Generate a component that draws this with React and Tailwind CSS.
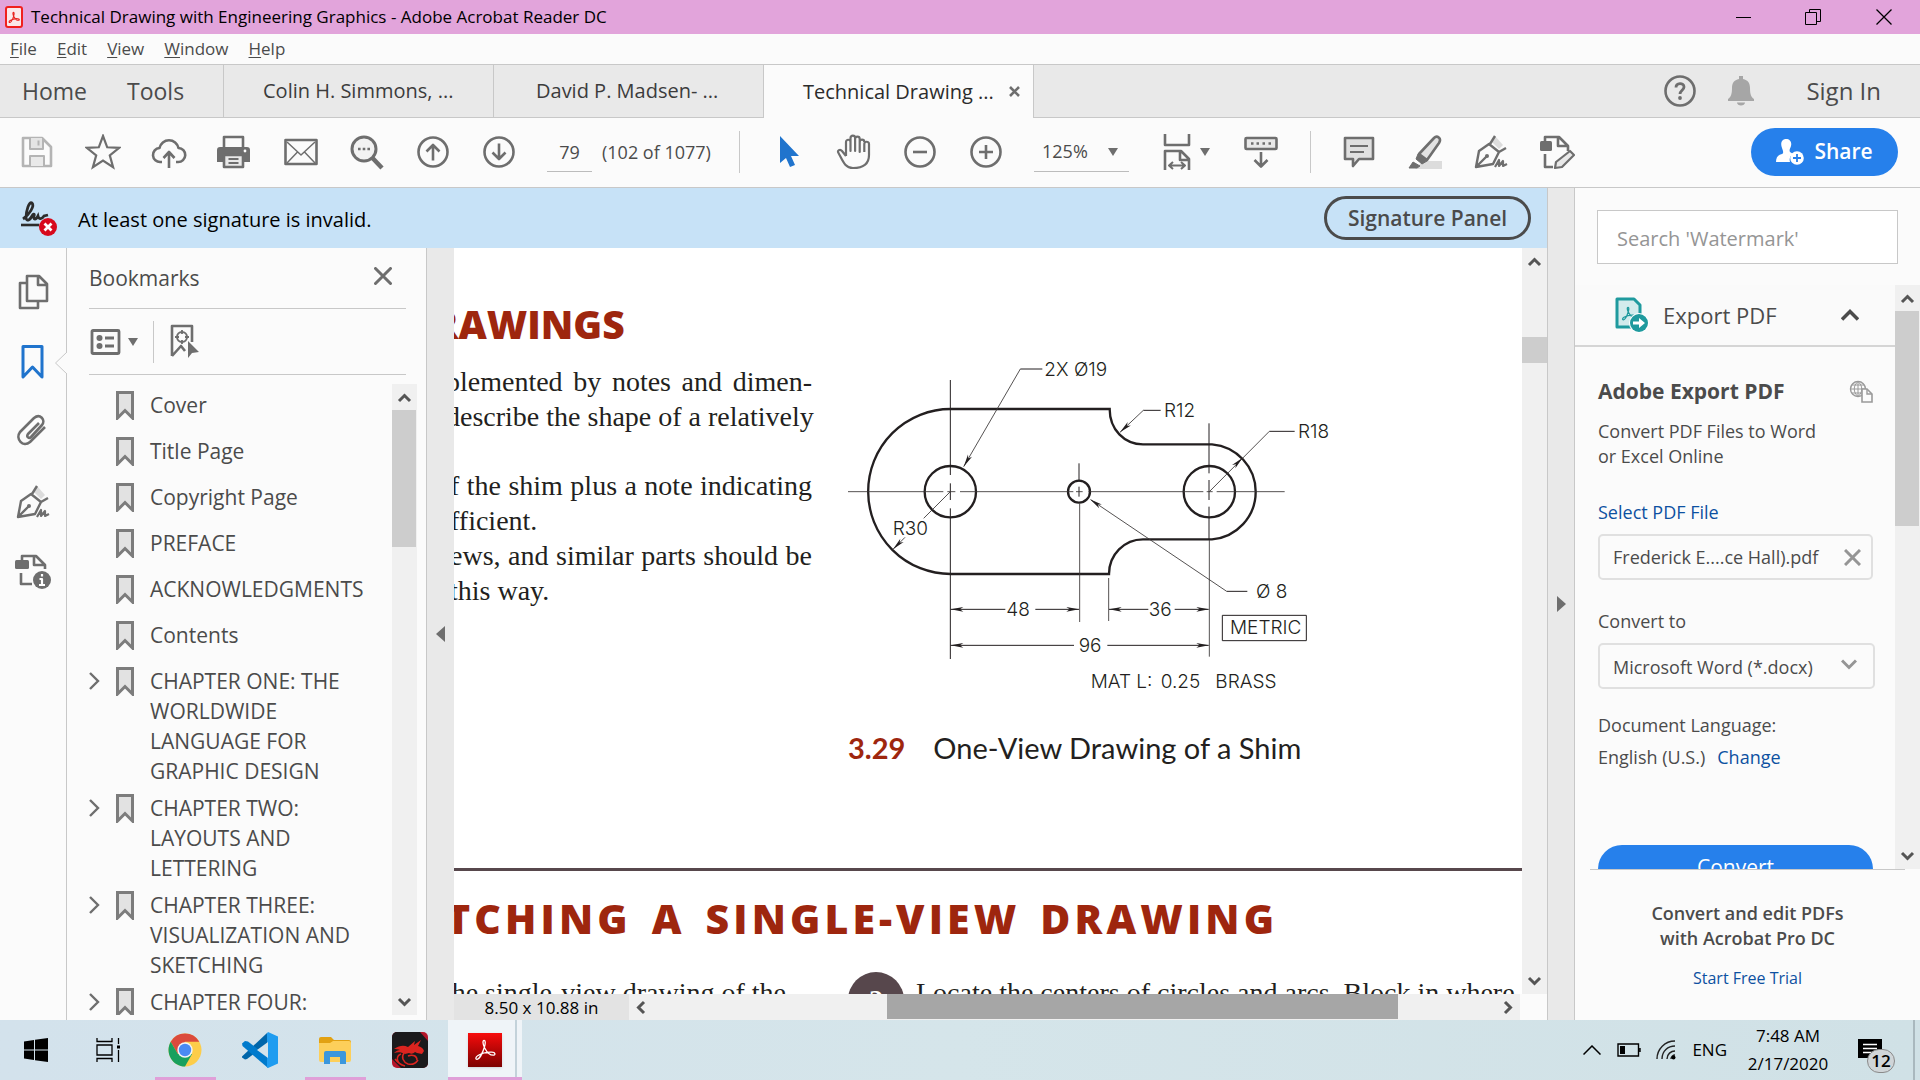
import React from "react";

const GRAY = "#6e6e6e";

/* ---------- shared bits ---------- */

const Icon = ({ size = 36, children, className = "" }) => (
  <svg
    width={size}
    height={size}
    viewBox="0 0 36 36"
    fill="none"
    stroke={GRAY}
    strokeWidth="2.6"
    strokeLinejoin="round"
    className={`shrink-0 ${className}`}
    aria-hidden="true"
  >
    {children}
  </svg>
);

const Caret = () => (
  <svg width="10" height="8" viewBox="0 0 10 8" aria-hidden="true" className="shrink-0">
    <path d="M0 0h10L5 8z" fill={GRAY} />
  </svg>
);

const ARROWS = {
  up: "M2 11 7.5 5.5 13 11",
  down: "M2 4l5.5 5.5L13 4",
  left: "M10 2 4.5 7.5 10 13",
  right: "M5 2l5.5 5.5L5 13",
};

const ScrollArrow = ({ dir }) => (
  <button
    aria-label={`Scroll ${dir}`}
    className="w-[25px] h-[26px] shrink-0 flex items-center justify-center"
  >
    <svg width="15" height="15" viewBox="0 0 15 15" fill="none" stroke="#555" strokeWidth="3">
      <path d={ARROWS[dir]} />
    </svg>
  </button>
);

const AcrobatMark = ({ size, stroke = "#fff", width = 1.4 }) => (
  <svg
    width={size}
    height={size}
    viewBox="0 0 24 24"
    fill="none"
    stroke={stroke}
    strokeWidth={width}
    strokeLinecap="round"
    aria-hidden="true"
  >
    <path d="M11.2 3.2c-1.6 0-1.3 3.4.5 6.9 1.9 3.6 5 6.7 7.8 6.7 2.4 0 2.4-2.6-1.2-2.8-4.6-.3-9.6 1.2-12.8 3.1-2.6 1.6-2.3 3.7-.8 3.5 2.3-.3 5.2-6.2 6.7-11.1 1-3.3 1.3-6.2-.2-6.3z" />
  </svg>
);

const PenIcon = () => (
  <Icon>
    <path d="M22 2l8 9-4 4-8-8z" fill="#dcdcdc" stroke="none" />
    <path d="M3 33 6 17l10-7 10 8-6 12zM3 33l11-11M22 2l-5 8M33 14l-7 4" strokeWidth="2.4" />
    <circle cx="14" cy="22" r="2" fill={GRAY} stroke="none" />
    <path d="M22 33l4-7v6l4-5v5l4-2" strokeWidth="2.2" />
  </Icon>
);

/* ---------- window chrome ---------- */

const TitleBar = () => (
  <header className="h-[34px] shrink-0 bg-[#e2a4db] flex items-center pl-[5px] text-black">
    <span className="w-[18px] h-[22px] shrink-0 rounded-[3px] border-2 border-[#f0201e] bg-[#fbe9ea] flex items-center justify-center">
      <AcrobatMark size={15} stroke="#e8201c" width={1.8} />
    </span>
    <h1 className="ml-2 text-[17px] whitespace-nowrap">
      Technical Drawing with Engineering Graphics - Adobe Acrobat Reader DC
    </h1>
    <div className="ml-auto flex h-full">
      <button aria-label="Minimize" className="w-[70px] flex items-center justify-center">
        <svg width="15" height="15" stroke="#000">
          <path d="M0 7.5h15" />
        </svg>
      </button>
      <button aria-label="Restore" className="w-[70px] flex items-center justify-center">
        <svg width="16" height="16" fill="none" stroke="#000">
          <path d="M.5 3.5h11v12H.5zM4.5 3.5v-3h11v12h-4" />
        </svg>
      </button>
      <button aria-label="Close" className="w-[72px] flex items-center justify-center">
        <svg width="16" height="16" stroke="#000" strokeWidth="1.3">
          <path d="M.5.5l15 15M15.5.5l-15 15" />
        </svg>
      </button>
    </div>
  </header>
);

const MENUS = ["File", "Edit", "View", "Window", "Help"];

const MenuBar = () => (
  <nav className="h-[31px] shrink-0 flex items-center gap-5 pl-[10px] text-[17px] text-[#4b4b4b] border-b border-[#c8c8c8]">
    {MENUS.map((m) => (
      <button key={m}>
        <span className="underline underline-offset-2">{m[0]}</span>
        {m.slice(1)}
      </button>
    ))}
  </nav>
);

const TabBar = () => (
  <div className="h-[53px] shrink-0 flex bg-[#e9e9e9] text-[#4b4b4b]">
    <div className="w-[223px] flex items-center border-b border-[#c8c8c8] pl-[22px] gap-10 text-[23px]">
      <button>Home</button>
      <button>Tools</button>
    </div>
    <button className="w-[270px] border-l border-b border-[#c8c8c8] text-left pl-[39px] text-[20px] text-[#3c3c3c]">
      Colin H. Simmons, ...
    </button>
    <button className="w-[270px] border-l border-b border-[#c8c8c8] text-left pl-[42px] text-[20px] text-[#3c3c3c]">
      David P. Madsen- ...
    </button>
    <div className="w-[271px] border-x border-[#c8c8c8] bg-[#fbfbfb] flex items-center pl-[39px] pr-[13px] text-[20px] text-[#2c2c2c]">
      <button>Technical Drawing ...</button>
      <button aria-label="Close tab" className="ml-auto">
        <svg width="11" height="11" stroke={GRAY} strokeWidth="2.6">
          <path d="M1 1l9 9M10 1l-9 9" />
        </svg>
      </button>
    </div>
    <div className="flex-1 border-b border-[#c8c8c8] flex items-center justify-end pr-[39px]">
      <button aria-label="Help" className="w-8 h-8">
        <svg width="32" height="32" viewBox="0 0 32 32" fill="none" stroke={GRAY} strokeWidth="2.6">
          <circle cx="16" cy="16" r="14.5" />
          <path d="M12 12.5c0-5 8-5 8-.5 0 3-4 3.5-4 7" strokeWidth="2.8" />
          <circle cx="16" cy="23" r="1.9" fill={GRAY} stroke="none" />
        </svg>
      </button>
      <button aria-label="Notifications" className="ml-8">
        <svg width="26" height="30" viewBox="0 0 26 30" fill="#a6a6a6">
          <path d="M11 0h4v3c5 1 7 4 7 9 0 6 1 9 4 11v2H0v-2c3-2 4-5 4-11 0-5 2-8 7-9zM9 26.5h8c0 4-8 4-8 0z" />
        </svg>
      </button>
      <button className="ml-[52px] text-[24px]">Sign In</button>
    </div>
  </div>
);

/* ---------- toolbar ---------- */

const ToolButton = ({ label, children }) => (
  <button aria-label={label} className="w-[66px] h-full shrink-0 flex items-center justify-center">
    {children}
  </button>
);

const Divider = () => <span className="w-px h-[42px] bg-[#c8c8c8] shrink-0" />;

const Toolbar = () => (
  <div className="h-[70px] shrink-0 flex items-center pl-1 pr-[22px] pb-px border-b border-[#c8c8c8] text-[#4b4b4b] text-[18px]">
    <ToolButton label="Save">
      <Icon>
        <g stroke="#b4b4b4">
          <path d="M4 4h19l9 9v19H4z" />
          <path d="M11 4v11h13V4" fill="#e4e4e4" strokeWidth="2" />
          <path d="M19.5 6.5v5" strokeWidth="2" />
          <path d="M11 32V22h14v10" fill="#e9e9e9" strokeWidth="2" />
        </g>
      </Icon>
    </ToolButton>
    <ToolButton label="Star">
      <Icon>
        <path
          d="M18 2l4.2 11.3 12 .5-9.4 7.6 3.3 11.7L18 26.500 7.900 33.100l3.300-11.700L1.800 13.800l12-.5z"
          strokeWidth="2.2"
          strokeLinejoin="miter"
        />
      </Icon>
    </ToolButton>
    <ToolButton label="Upload">
      <Icon>
        <path d="M11 28H9.5A7 7 0 0 1 8.5 14 9.7 9.7 0 0 1 27.5 14 7 7 0 0 1 27 28h-2M18 34V18M12.5 24 18 18l5.5 6" />
      </Icon>
    </ToolButton>
    <ToolButton label="Print">
      <Icon>
        <path d="M7 14V3h19v11" />
        <path
          d="M0 16a3 3 0 0 1 3-3h27a3 3 0 0 1 3 3v12h-6v-6H6v6H0z"
          fill={GRAY}
          stroke="none"
        />
        <path d="M7 21h19v12H7z" fill="#e9e9e9" />
        <path d="M11.5 25h10M11.5 29h10" strokeWidth="1.8" />
        <circle cx="28" cy="17" r="1.4" fill="#fff" stroke="none" />
      </Icon>
    </ToolButton>
    <ToolButton label="Mail">
      <Icon>
        <path d="M2.5 6h31v24h-31z" />
        <path d="M4 8l14 13L32 8M4 29l10.5-11M32 29 21.500 18" strokeWidth="1.5" />
      </Icon>
    </ToolButton>
    <ToolButton label="Find">
      <Icon>
        <circle cx="15" cy="15" r="12" fill="#f2f2f2" strokeWidth="3" />
        <path d="M23.5 24 33 34" strokeWidth="4.5" />
        <path d="M9 15h2.6M13.7 15h2.6M18.4 15H21" />
      </Icon>
    </ToolButton>
    <ToolButton label="Previous page">
      <Icon>
        <circle cx="18" cy="18" r="14.5" />
        <path d="M18 26.5V11M11.5 17.5 18 11l6.5 6.5" />
      </Icon>
    </ToolButton>
    <ToolButton label="Next page">
      <Icon>
        <circle cx="18" cy="18" r="14.5" />
        <path d="M18 9.5V25M11.5 18.5 18 25l6.5-6.5" />
      </Icon>
    </ToolButton>

    <input
      aria-label="Page"
      defaultValue="79"
      className="ml-[15px] w-[45px] h-10 shrink-0 text-center bg-transparent border-b border-[#bcbcbc]"
    />
    <span className="ml-[10px] w-[137px] whitespace-nowrap">(102 of 1077)</span>
    <Divider />

    <div className="flex ml-[15px]">
      <ToolButton label="Select">
        <Icon>
          <path d="M10 2v27l6-5 4 9 5-2-4-9h8z" fill="#2074cd" stroke="none" />
        </Icon>
      </ToolButton>
      <ToolButton label="Pan">
        <Icon>
          <path
            d="M10 22V8a2.2 2.2 0 0 1 4.500 0v9V4a2.200 2.200 0 0 1 4.600 0v13V5a2.200 2.200 0 0 1 4.600 0v13V8a2.200 2.200 0 0 1 4.600 0M10 22l-4-5c-2-2.500-5-.5-3.500 2 4 7 6 15 14.500 15 10 0 16-4 16-13V10c0-3-4.700-3-4.700 0v8"
            strokeWidth="2.2"
          />
        </Icon>
      </ToolButton>
      <ToolButton label="Zoom out">
        <Icon>
          <circle cx="18" cy="18" r="14.5" />
          <path d="M11 18h14" />
        </Icon>
      </ToolButton>
      <ToolButton label="Zoom in">
        <Icon>
          <circle cx="18" cy="18" r="14.5" />
          <path d="M11 18h14M18 11v14" />
        </Icon>
      </ToolButton>
    </div>

    <div className="relative ml-[15px] w-[95px] shrink-0">
      <select
        aria-label="Zoom"
        className="appearance-none w-full h-10 pl-2 bg-transparent border-b border-[#bcbcbc]"
      >
        <option>125%</option>
      </select>
      <span className="absolute right-[11px] top-4 pointer-events-none">
        <Caret />
      </span>
    </div>

    <button aria-label="Fit width" className="ml-[30px] flex items-center gap-[5px]">
      <Icon>
        <path d="M6 0v11h24V0M6 36V17h16l8 8v11M21 17v9h9" />
        <path d="M11 31.5h14M14 28l-4 3.5 4 3.5M22 28l4 3.5-4 3.5" strokeWidth="2" />
      </Icon>
      <Caret />
    </button>
    <div className="flex ml-[18px] w-[82px]">
      <ToolButton label="Reading mode">
        <Icon>
          <rect x="2.5" y="4" width="31" height="11" rx="1" fill="#e9e9e9" />
          <path d="M8 9.5h2.5M13.5 9.5H16M19.5 9.5H22M25.5 9.5H28M18 18v14M11.5 26 18 32.5l6.5-6.5" />
        </Icon>
      </ToolButton>
    </div>
    <Divider />

    <div className="flex ml-[15px]">
      <ToolButton label="Comment">
        <Icon>
          <path d="M4 4h28v21H18l-6 7v-7H4z" fill="#e0e0e0" />
          <path d="M9 12h18M9 18h14" strokeWidth="2" />
        </Icon>
      </ToolButton>
      <ToolButton label="Highlight">
        <Icon>
          <path d="M16 27h19v8H8z" fill="#dcdcdc" stroke="none" />
          <path d="M12 20 27 4c3-3 8 0 5 5L20 26z" fill="#e2e2e2" />
          <path d="M11 20l9 7-5 3-6-5zM6 28l7 4-3 2H2z" fill={GRAY} strokeWidth="1" />
        </Icon>
      </ToolButton>
      <ToolButton label="Sign">
        <PenIcon />
      </ToolButton>
      <ToolButton label="Edit page">
        <Icon>
          <path d="M6 7V3h14l9 9v5M19 3v9h9M6 20v13h8" />
          <rect x="1" y="7" width="12" height="10" rx="1.5" fill={GRAY} stroke="none" />
          <path d="M16 34l1-6L31 17l4 4-12 12z" fill="#e9e9e9" strokeWidth="2.2" />
        </Icon>
      </ToolButton>
    </div>

    <button className="ml-auto w-[147px] h-12 shrink-0 rounded-full bg-[#2680eb] text-white text-[21px] font-semibold flex items-center justify-center gap-[10px]">
      <svg width="28" height="28" viewBox="0 0 28 28" fill="#fff" aria-hidden="true">
        <path d="M10 1c4 0 6 3 5 7-1 3-2 4-1 6l3 2c-3 2-4 5-3 8H0c0-5 2-7 6-8 2-1 1-3 0-6C4 5 6 1 10 1z" />
        <circle cx="21" cy="20" r="6.8" />
        <path d="M21 16v8M17 20h8" stroke="#2680eb" strokeWidth="1.8" />
      </svg>
      Share
    </button>
  </div>
);

/* ---------- left side ---------- */

const Rail = () => (
  <aside className="relative w-[67px] shrink-0 border-r border-[#c8c8c8] pt-[9px] flex flex-col items-center">
    <button aria-label="Pages" className="h-[70px]">
      <Icon>
        <path d="M11 9H5v25h18v-6" />
        <path d="M12 2h12l8 8v17H12zM23 2v9h9" fill="#fbfbfb" />
      </Icon>
    </button>
    <button aria-label="Bookmarks" className="h-[70px]">
      <Icon>
        <path d="M8 2.5h19V33l-9.500-10L8 33z" stroke="#2074cd" strokeWidth="3" />
      </Icon>
    </button>
    <button aria-label="Attachments" className="h-[70px]">
      <Icon>
        <path d="M24 9 13 20c-2 3 1 5 3 3l11-12c4-5-2-12-8-7L5 18C0 25 8 34 15 28l15-15" />
      </Icon>
    </button>
    <button aria-label="Signatures" className="h-[70px]">
      <PenIcon />
    </button>
    <button aria-label="Page info" className="h-[70px]">
      <Icon>
        <path d="M7 6V2h14l9 9v4M19 2v9h10M6 19v11h11" />
        <rect x="0" y="6" width="14" height="9" rx="1.5" fill={GRAY} stroke="none" />
        <circle cx="27" cy="26" r="9" fill={GRAY} stroke="none" />
        <path d="M27 20v2.5M24.5 25H27v5.5M24 31h6" stroke="#fff" strokeWidth="2.2" />
      </Icon>
    </button>
    {/* notch pointing at the active panel */}
    <svg width="13" height="22" className="absolute -right-px top-[104px]" fill="#fbfbfb">
      <path d="M13 0 1.5 11 13 22" stroke="#c8c8c8" />
    </svg>
  </aside>
);

const BOOKMARKS = [
  { title: "Cover" },
  { title: "Title Page" },
  { title: "Copyright Page" },
  { title: "PREFACE" },
  { title: "ACKNOWLEDGMENTS" },
  { title: "Contents" },
  { title: "CHAPTER ONE: THE WORLDWIDE LANGUAGE FOR GRAPHIC DESIGN", nested: true },
  { title: "CHAPTER TWO: LAYOUTS AND LETTERING", nested: true },
  { title: "CHAPTER THREE: VISUALIZATION AND SKETCHING", nested: true },
  { title: "CHAPTER FOUR:", nested: true },
];

const BookmarksPanel = () => (
  <section className="w-[360px] shrink-0 border-r border-[#c8c8c8] flex flex-col text-[#4b4b4b]">
    <div className="h-[61px] ml-[22px] mr-5 shrink-0 flex items-center border-b border-[#c8c8c8] pr-[14px]">
      <h2 className="text-[21px] pt-[2px]">Bookmarks</h2>
      <button aria-label="Close panel" className="ml-auto mb-1">
        <svg width="18" height="18" stroke={GRAY} strokeWidth="3" strokeLinecap="round">
          <path d="M1.5 1.5l15 15M16.5 1.5l-15 15" />
        </svg>
      </button>
    </div>
    <div className="h-[66px] ml-[22px] mr-5 shrink-0 flex items-center border-b border-[#c8c8c8]">
      <button aria-label="Options" className="flex items-center gap-[7px]">
        <svg width="32" height="26" viewBox="0 0 32 26" fill="none" stroke={GRAY} strokeWidth="2.8">
          <rect x="3" y="1.5" width="27" height="23" rx="1" />
          <path d="M16 9h9M16 17h9" />
          <circle cx="10.5" cy="9" r="3" fill={GRAY} stroke="none" />
          <circle cx="10.5" cy="17" r="3" fill={GRAY} stroke="none" />
        </svg>
        <Caret />
      </button>
      <span className="ml-[15px] mr-[14px]">
        <span className="block w-px h-[42px] bg-[#c8c8c8]" />
      </span>
      <button aria-label="Find current bookmark">
        <Icon>
          <path d="M4 32V2h20v16M4 32l9-10 4 5" />
          <circle cx="14" cy="13" r="5" strokeWidth="2" />
          <path d="M14 6v4M14 16v4M7 13h4M17 13h4" strokeWidth="1.8" />
          <path d="M20 17v17l4-5 7-1z" fill={GRAY} stroke="none" />
        </Icon>
      </button>
    </div>
    <div className="mt-[9px] mb-[5px] flex-1 min-h-0 flex pr-[9px]">
      <ul className="flex-1 min-w-0 overflow-hidden pt-[6px] pl-[22px] text-[21px] leading-[30px]">
        {BOOKMARKS.map((b) => (
          <li key={b.title} className="flex min-h-[46px] pb-[7px]">
            <span className="w-[27px] shrink-0 pt-[6px]">
              {b.nested && (
                <svg width="11" height="18" fill="none" stroke={GRAY} strokeWidth="2.4">
                  <path d="M1 1l8 8-8 8" />
                </svg>
              )}
            </span>
            <svg width="18" height="29" className="shrink-0 mt-px" aria-hidden="true">
              <path d="M1.5 1.5h15V27L9 19.5 1.5 27z" fill="#e2e2e2" stroke="#7c7c7c" strokeWidth="3" />
            </svg>
            <span className="ml-4 w-[230px]">{b.title}</span>
          </li>
        ))}
      </ul>
      <div className="w-[25px] shrink-0 bg-[#f0f0f0] flex flex-col">
        <ScrollArrow dir="up" />
        <span className="h-[137px] mr-px bg-[#cdcdcd]" />
        <span className="mt-auto" />
        <ScrollArrow dir="down" />
      </div>
    </div>
  </section>
);

/* ---------- document ---------- */

/* arrowhead whose tip sits at x,y and points along the given angle */
const Head = ({ x, y, angle }) => (
  <path d="M0 0-38-7-28 0-38 7z" transform={`translate(${x} ${y}) rotate(${angle})`} fill="#231f20" stroke="none" />
);

const ShimDrawing = () => (
  <svg
    width="500"
    height="370"
    viewBox="0 0 1500 1110"
    fill="none"
    stroke="#231f20"
    className="block"
    role="img"
    aria-label="One-view drawing of a shim"
  >
    <g strokeWidth="7">
      <path d="M332 207H809c0 62 44 106 100 106h207a143 143 0 0 1 0 285H909c-56 0-102 46-102 104H332a247.500 247.500 0 0 1 0-495z" />
      <circle cx="331" cy="455" r="77" />
      <circle cx="717" cy="455" r="33" />
      <circle cx="1108" cy="455" r="77" />
    </g>
    <g strokeWidth="3">
      <path d="M331 120v285M331 430v50M331 505v452M1107 250v150M1107 420v60M1107 500v100M717 370v55M717 440v30" />
      <path d="M332 808h164M586 808h131M807 808h118M1004 808h102M332 916h370M802 916h304" />
      <path d="M541 87h66M910 211h52M1288 274h76M1160 754h62" />
      <path d="M1147 826h252v76h-252z" />
    </g>
    <g strokeWidth="2.6" stroke="#3a3637">
      <path d="M24 455H310M322 455h24M360 455h340M708 455h20M745 455h345M1100 455h18M1130 455h204" />
      <path d="M719 490v356M806 714v129M1108 600v350" />
      <path d="M541 87 371 380M910 211l-70 66M1288 274 1108 455M752 479l408 275M331 455l-80 80M195 592l-36 36" />
    </g>
    <Head x={371} y={380} angle={120} />
    <Head x={840} y={277} angle={137} />
    <Head x={1208} y={353} angle={-45} />
    <Head x={750} y={478} angle={214} />
    <Head x={159} y={628} angle={135} />
    <Head x={332} y={808} angle={180} />
    <Head x={717} y={808} angle={0} />
    <Head x={807} y={808} angle={180} />
    <Head x={1107} y={808} angle={0} />
    <Head x={332} y={916} angle={180} />
    <Head x={1107} y={916} angle={0} />
    <g fill="#231f20" stroke="none" fontFamily="Inter, sans-serif" fontWeight="300" fontSize="57">
      <text x="613" y="107">2X Ø19</text>
      <text x="972" y="231">R12</text>
      <text x="1374" y="294">R18</text>
      <text x="158" y="585">R30</text>
      <text x="1248" y="773">Ø 8</text>
      <text x="499" y="827">48</text>
      <text x="926" y="827">36</text>
      <text x="716" y="935">96</text>
      <text x="1170" y="881">METRIC</text>
      <text x="752" y="1043">MAT L:</text>
      <text x="962" y="1043">0.25</text>
      <text x="1126" y="1043">BRASS</text>
    </g>
  </svg>
);

const Page = () => (
  <article className="flex-1 min-w-0 overflow-hidden bg-white text-[#231f20] whitespace-nowrap">
    <div className="flex gap-7">
      <div className="w-[358px] shrink-0 pt-14 font-['Liberation_Serif',serif] text-[28px]">
        <h2 className="-ml-[22px] font-['Open_Sans',sans-serif] font-extrabold text-[39px] leading-10 text-[#9e260e]">
          RAWINGS
        </h2>
        <div className="-ml-2 mt-5 leading-[35px]">
          <p className="[text-align-last:justify]">plemented by notes and dimen-</p>
          <p className="[text-align-last:justify]">describe the shape of a relatively</p>
        </div>
        <div className="-ml-1 mt-[34px] leading-[35px]">
          <p className="[text-align-last:justify]">f the shim plus a note indicating</p>
          <p>fficient.</p>
          <p className="[text-align-last:justify]">ews, and similar parts should be</p>
          <p>this way.</p>
        </div>
      </div>
      <figure className="pt-[92px]">
        <ShimDrawing />
        <figcaption className="mt-5 pl-2 flex gap-7 font-['Lato',sans-serif] text-[29px] leading-9">
          <b className="text-[#9e260e]">3.29</b>
          <span>One-View Drawing of a Shim</span>
        </figcaption>
      </figure>
    </div>
    <hr className="mt-[102px] border-0 h-[3px] bg-[#57474c]" />
    <h2 className="mt-[23px] -ml-2 flex gap-5 font-['Open_Sans',sans-serif] font-extrabold text-[41px] leading-[48px] tracking-widest text-[#9e260e]">
      <span>TCHING</span> <span>A</span> <span>SINGLE-VIEW</span> <span>DRAWING</span>
    </h2>
    <div className="mt-[30px] flex font-['Liberation_Serif',serif] text-[28px] leading-[42px]">
      <p className="w-[332px] shrink-0 flex justify-end">he single-view drawing of the</p>
      <span className="ml-[62px] w-14 h-14 shrink-0 rounded-full bg-[#57474c] text-white font-bold flex items-center justify-center">
        2
      </span>
      <p className="ml-3">Locate the centers of circles and arcs. Block in where</p>
    </div>
  </article>
);

const DocumentView = () => (
  <main className="flex-1 min-w-0 flex flex-col">
    <div className="flex-1 min-h-0 flex">
      <Page />
      <div className="w-[25px] shrink-0 bg-[#f0f0f0] flex flex-col">
        <ScrollArrow dir="up" />
        <span className="mt-[63px] h-[26px] bg-[#cdcdcd]" />
        <span className="mt-auto" />
        <ScrollArrow dir="down" />
      </div>
    </div>
    <div className="h-[26px] shrink-0 flex">
      <div className="w-[175px] shrink-0 bg-[#e3e3e3] text-black text-[17px] leading-[28px] text-center">
        8.50 x 10.88 in
      </div>
      <div className="flex-1 bg-[#f0f0f0] flex">
        <ScrollArrow dir="left" />
        <span className="flex-1" />
        <span className="w-[511px] mb-px bg-[#a6a6a6]" />
        <span className="w-[97px]" />
        <ScrollArrow dir="right" />
      </div>
      <span className="w-[27px] bg-[#fbfbfb]" />
    </div>
  </main>
);

const SignatureBar = () => (
  <div className="h-[60px] shrink-0 bg-[#c7e2f7] flex items-center pl-5 pr-4">
    <svg width="38" height="38" viewBox="0 0 38 38" fill="none" aria-hidden="true">
      <path
        d="M3 20c6-4 12-13 9-16-3-2-6 8-6 15 1 4 4 2 6-2 1-2 3-3 2 0-1 4 2 4 4 0 1 4 4 3 6 0l4-1"
        stroke="#2c2c2c"
        strokeWidth="2.8"
      />
      <path d="M1 26h18" stroke="#2c2c2c" strokeWidth="2.6" />
      <circle cx="28" cy="28" r="9" fill="#d7091c" />
      <path d="M24.5 24.5l7 7M31.5 24.5l-7 7" stroke="#fff" strokeWidth="2.8" />
    </svg>
    <p className="ml-5 pt-1 text-[20px] text-black">At least one signature is invalid.</p>
    <button className="ml-auto w-[207px] h-11 rounded-full border-[3px] border-[#4b4b4b] text-[#4b4b4b] text-[21px] leading-[36px] font-semibold">
      Signature Panel
    </button>
  </div>
);

/* ---------- tools pane ---------- */

const ToolsPane = () => (
  <aside className="w-[345px] shrink-0 flex flex-col text-[18px] leading-[25px] text-[#4b4b4b]">
    <div className="pl-[22px] pr-[22px] pt-[22px] shrink-0">
      <input
        aria-label="Search tools"
        placeholder="Search 'Watermark'"
        className="w-full h-[54px] pl-[19px] pt-[2px] bg-white border border-[#c8c8c8] text-[20px] placeholder:text-[#959595]"
      />
    </div>
    <div className="mt-[21px] flex-1 min-h-0 flex">
      <div className="flex-1 min-w-0 overflow-hidden">
        <button className="w-full h-[62px] border-b-2 border-[#d5d5d5] bg-[#fafafa] flex items-center pl-10 pr-[36px] text-[22px]">
          <svg width="34" height="36" viewBox="0 0 34 36" aria-hidden="true">
            <path d="M2 2h17l6 6v22H2z" fill="#d3ebec" stroke="#1f9a9e" strokeWidth="3" strokeLinejoin="round" />
            <g transform="translate(5 8) scale(.72)">
              <path
                d="M11.2 3.2c-1.6 0-1.3 3.4.5 6.9 1.9 3.6 5 6.7 7.8 6.7 2.4 0 2.4-2.6-1.2-2.8-4.6-.3-9.6 1.2-12.8 3.1-2.6 1.6-2.3 3.7-.8 3.5 2.3-.3 5.2-6.2 6.7-11.1 1-3.3 1.3-6.2-.2-6.3z"
                fill="none"
                stroke="#1f9a9e"
                strokeWidth="1.8"
              />
            </g>
            <circle cx="24" cy="26" r="10" fill="#fff" />
            <circle cx="24" cy="26" r="9" fill="#1f9a9e" />
            <path d="M18 24.5h6V21l6 5-6 5v-3.5h-6z" fill="#fff" />
          </svg>
          <span className="ml-[14px]">Export PDF</span>
          <svg width="18" height="12" className="ml-auto" fill="none" stroke="#4b4b4b" strokeWidth="3.5">
            <path d="M1 10.5l8-8 8 8" />
          </svg>
        </button>
        <div className="pl-[23px] pr-5">
          <div className="mt-8 flex items-center">
            <h3 className="text-[21px] font-bold">Adobe Export PDF</h3>
            <svg width="24" height="24" className="ml-auto mr-[2px]" fill="none" stroke="#9a9a9a" strokeWidth="1.4">
              <circle cx="9" cy="9" r="7.5" />
              <path d="M1 9h16M2.5 5h13M2.5 13h13M9 1v16M9 1.5c-5 4-5 11 0 15M9 1.5c5 4 5 11 0 15" strokeWidth="1" />
              <path d="M13 9h5l5 5v8H13z" fill="#fbfbfb" strokeWidth="1.6" />
              <path d="M18 9v5h5" />
            </svg>
          </div>
          <p className="mt-[15px]">
            Convert PDF Files to Word
            <br />
            or Excel Online
          </p>
          <a href="#select" className="mt-[31px] block text-[#0d51a1]">
            Select PDF File
          </a>
          <div className="mt-[9px] h-[46px] mr-[2px] rounded-[5px] border-2 border-[#e0e0e0] flex items-center pl-[13px] pr-[10px]">
            <span>Frederick E....ce Hall).pdf</span>
            <button aria-label="Remove file" className="ml-auto">
              <svg width="17" height="17" stroke="#959595" strokeWidth="3">
                <path d="M1 1l15 15M16 1 1 16" />
              </svg>
            </button>
          </div>
          <label htmlFor="format" className="mt-[29px] block">
            Convert to
          </label>
          <div className="relative mt-[9px]">
            <select
              id="format"
              className="appearance-none w-full h-[46px] rounded-[5px] border-2 border-[#e0e0e0] bg-transparent pl-[13px] pt-[2px]"
            >
              <option>Microsoft Word (*.docx)</option>
            </select>
            <svg
              width="16"
              height="11"
              className="absolute right-[18px] top-4 pointer-events-none"
              fill="none"
              stroke="#959595"
              strokeWidth="3"
            >
              <path d="M1 1.5l7 7 7-7" />
            </svg>
          </div>
          <p className="mt-6">Document Language:</p>
          <p className="mt-[7px]">
            English (U.S.)
            <a href="#language" className="ml-3 text-[#0d51a1]">
              Change
            </a>
          </p>
          <button className="mt-[75px] w-[275px] h-12 pb-1 rounded-full bg-[#2680eb] text-white text-[21px]">
            Convert
          </button>
        </div>
      </div>
      <div className="w-[25px] shrink-0 bg-[#f0f0f0] flex flex-col">
        <ScrollArrow dir="up" />
        <span className="h-[215px] mr-px bg-[#cdcdcd]" />
        <span className="mt-auto" />
        <ScrollArrow dir="down" />
      </div>
    </div>
    <div className="h-[151px] shrink-0 ml-[15px] mr-[15px] border-t border-[#c8c8c8] pt-[31px] text-center">
      <p className="font-semibold">
        Convert and edit PDFs
        <br />
        with Acrobat Pro DC
      </p>
      <a href="#trial" className="mt-[15px] block text-[16px] text-[#0d51a1]">
        Start Free Trial
      </a>
    </div>
  </aside>
);

/* ---------- taskbar ---------- */

const TaskItem = ({ label, running, children }) => (
  <button aria-label={label} className="relative w-[75px] h-full pr-[2px] flex items-center justify-center">
    {children}
    {running && <span className="absolute bottom-0 left-[7px] right-[7px] h-[3px] bg-[#e09fd8]" />}
  </button>
);

const Taskbar = () => (
  <footer className="h-[60px] shrink-0 flex text-black bg-linear-to-r from-[#d3e2ec] via-[#d5e5ea] to-[#d0e1e6]">
    <button aria-label="Start" className="w-[72px] flex items-center justify-center">
      <svg width="24" height="24">
        <path d="M0 3.5 10 2v9.5H0zM11 1.8 24 0v11.5H11zM0 12.5h10V22L0 20.500zM11 12.500h13V24l-13-1.800z" />
      </svg>
    </button>
    <button aria-label="Task view" className="w-[72px] mr-1 flex items-center justify-center">
      <svg width="25" height="24" fill="none" stroke="#000" strokeWidth="1.3">
        <path d="M1 0v3.5h15V0M1 24v-3.5h15V24M1 7h15v10H1zM22.5 0v6M22.5 12v12" />
        <path d="M21 7.5h3v3h-3z" fill="#000" stroke="none" />
      </svg>
    </button>
    <TaskItem label="Chrome" running>
      <svg width="34" height="34">
        <circle cx="17" cy="17" r="16.5" fill="#fdcd4a" />
        <path d="M2.7 8.8A16.5 16.5 0 0 1 31.3 8.8H17L9.900 21z" fill="#db4a3c" />
        <path d="M2.7 8.8A16.5 16.5 0 0 0 17 33.5l7.1-12.4-14.2 0z" fill="#18a05e" />
        <circle cx="17" cy="17" r="7.7" fill="#f4f4f4" />
        <circle cx="17" cy="17" r="6.2" fill="#4a8af4" />
      </svg>
    </TaskItem>
    <TaskItem label="Visual Studio Code">
      <svg width="36" height="36">
        <path d="M0 24.5 25 1l4 8-24 18-2 .5-3-2z" fill="#0065a9" />
        <path d="M0 11.5l3-2.5 3 .5 22 17L26 36 .5 14z" fill="#007acc" />
        <path d="M26 0l10 4.5v27L26 36c-1.5-1-1-2-1-3V4c0-1-.5-3 1-4z" fill="#1f9cf0" />
        <path d="M26 10v16L15 18z" fill="#d4e3eb" />
      </svg>
    </TaskItem>
    <TaskItem label="File Explorer" running>
      <svg width="34" height="28" viewBox="0 0 34 28">
        <path d="M1 3a2 2 0 0 1 2-2h10l3 3h15a2 2 0 0 1 2 2v7H1z" fill="#e2a112" />
        <path d="M1 7h11l3-2h16a2 2 0 0 1 2 2v17a2 2 0 0 1-2 2H3a2 2 0 0 1-2-2z" fill="#fdcf5a" />
        <path d="M6 28V17a2 2 0 0 1 2-2h18a2 2 0 0 1 2 2v11h-6v-7H12v7z" fill="#3c97dd" />
      </svg>
    </TaskItem>
    <TaskItem label="Dragon Center">
      <svg width="36" height="36">
        <rect width="36" height="36" rx="5" fill="#b5162a" />
        <path d="M5 0h23l8 9v22a5 5 0 0 1-5 5H9l-9-9V5a5 5 0 0 1 5-5z" fill="#1a1a1c" />
        <path d="M2 17c6-4 10-4 14-2l7-6-1 4 7-5-3 6c3 1 5 2 6 5l-2 3-5-1-2-1c-2 2-4 2-6 1l-4 1c-4-2-7-2-11-1 2-2 4-3 6-3-2-1-4-1-6-1z" fill="#dc241f" />
        <path d="M9 22c-5 2-5 8 1 11M12 21c-3 4-1 9 4 11 4 1 8-1 10-4M16 24c5-2 9 0 9 4M3 27c3 4 6 6 10 7" fill="none" stroke="#dc241f" strokeWidth="1.5" />
      </svg>
    </TaskItem>
    <button
      aria-label="Acrobat Reader"
      className="w-[74px] flex items-center pl-5 bg-[#eff4f8] border-b-[3px] border-[#e09fd8] relative"
    >
      <span className="mt-[3px] w-[34px] h-[34px] bg-linear-to-b from-[#f80d0d] to-[#7d0202] shadow flex items-center justify-center">
        <AcrobatMark size={26} width={1.2} />
      </span>
      <span className="absolute right-[5px] top-0 bottom-0 w-[2px] bg-[#c3d2da]" />
    </button>

    <div className="ml-auto flex items-center">
      <svg width="18" height="10" fill="none" stroke="#000" strokeWidth="1.5">
        <path d="M.5 9.5 9 1l8.500 8.500" />
      </svg>
      <svg width="24" height="14" className="ml-4" fill="none" stroke="#000" strokeWidth="1.4">
        <path d="M1 1h20.5v12H1zM23 5v4" />
        <path d="M3 3h5v8H3z" fill="#000" stroke="none" />
      </svg>
      <svg width="20" height="20" className="ml-[15px]" fill="none" stroke="#222" strokeWidth="1.4">
        <path d="M1 19C1 9 9 1 19 1M6 19c0-8 6-13 13-13M11 19c0-5 4-8 8-8M15 19c0-2 2-4 4-4" />
        <circle cx="17.5" cy="17.5" r="2" fill="#000" stroke="none" />
      </svg>
      <span className="ml-4 text-[17px]">ENG</span>
      <time className="ml-[18px] w-[86px] text-[17px] leading-7 text-center">
        7:48 AM
        <br />
        2/17/2020
      </time>
      <button aria-label="Notifications" className="relative ml-[27px] w-[55px] h-6">
        <svg width="24" height="23">
          <path d="M0 0h24v19h-9l-5 4v-4H0z" />
          <path d="M5 5.5h14M5 9.5h14M5 13.5h10" stroke="#fff" strokeWidth="1.3" />
        </svg>
        <span className="absolute left-[9px] top-[11px] w-7 h-6 rounded-full border border-[#8a8a8a] bg-[#d0d5d8] text-[17px] leading-[22px] text-center font-semibold">
          12
        </span>
      </button>
      <span className="w-[2px] h-[60px] bg-[#a9b8be] mr-[5px]" />
    </div>
  </footer>
);

const App = () => {
  return (
    <div className="h-screen flex flex-col overflow-hidden bg-[#fbfbfb] font-['Open_Sans',sans-serif]">
      <TitleBar />
      <MenuBar />
      <TabBar />
      <Toolbar />
      <div className="flex-1 min-h-0 flex">
        <div className="flex-1 min-w-0 flex flex-col">
          <SignatureBar />
          <div className="flex-1 min-h-0 flex">
            <Rail />
            <BookmarksPanel />
            <button aria-label="Collapse bookmarks" className="w-[27px] shrink-0 bg-[#e9e9e9] flex items-center justify-center">
              <svg width="9" height="16">
                <path d="M9 0v16L0 8z" fill={GRAY} />
              </svg>
            </button>
            <DocumentView />
          </div>
        </div>
        <button
          aria-label="Collapse tools"
          className="w-[28px] shrink-0 bg-[#e9e9e9] border-x border-[#c8c8c8] flex items-center justify-center"
        >
          <svg width="9" height="16">
            <path d="M0 0v16l9-8z" fill={GRAY} />
          </svg>
        </button>
        <ToolsPane />
      </div>
      <Taskbar />
    </div>
  );
};

export default App;
